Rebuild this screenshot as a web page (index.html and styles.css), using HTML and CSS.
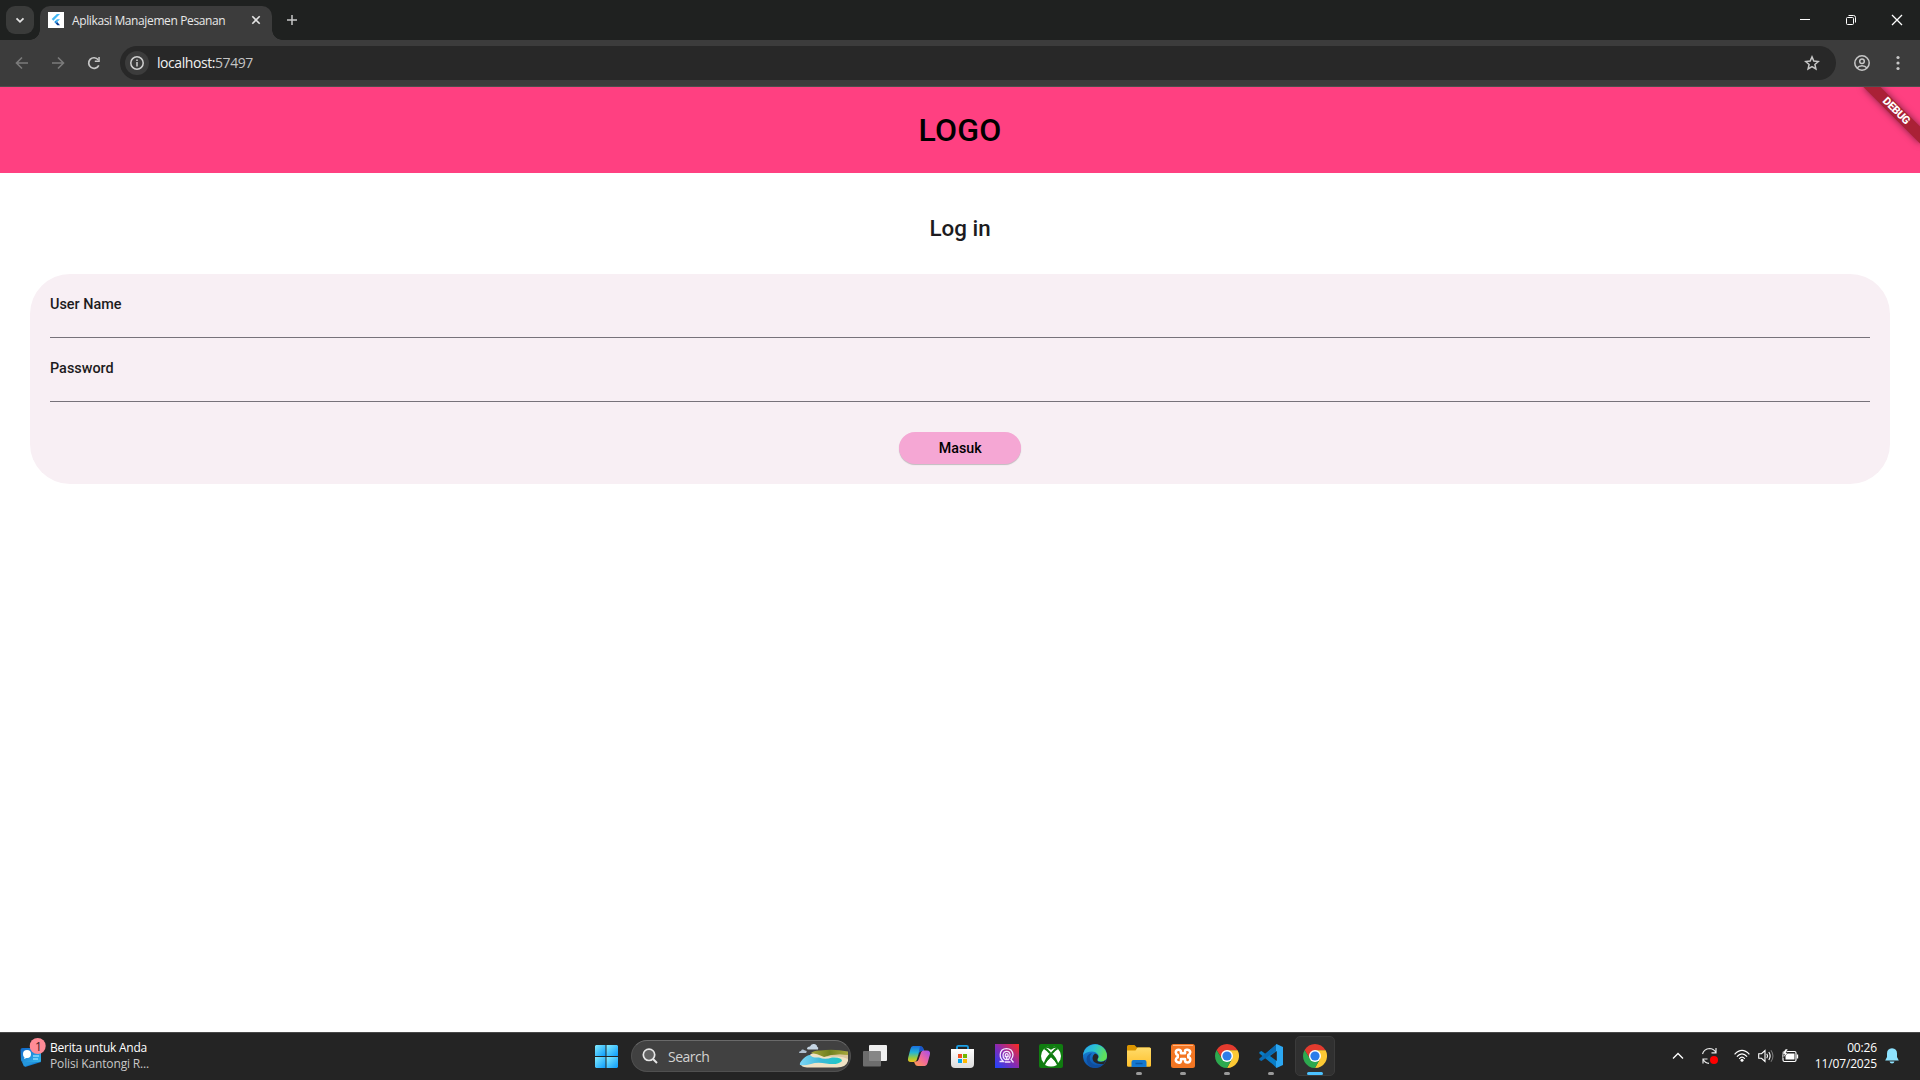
FILE: index.html
```html
<!DOCTYPE html>
<html lang="id">
<head>
<meta charset="utf-8">
<title>Aplikasi Manajemen Pesanan</title>
<link rel="stylesheet" href="styles.css">
</head>
<body>
<svg class="defs" width="0" height="0" aria-hidden="true">
  <defs>
    <linearGradient id="win" x1="0" y1="0" x2="1" y2="1"><stop offset="0" stop-color="#83ebfd"/><stop offset="1" stop-color="#0a9bfb"/></linearGradient>
    <linearGradient id="copA" x1="0" y1="0" x2="0" y2="1"><stop offset="0" stop-color="#1a6fe0"/><stop offset=".4" stop-color="#22b5d8"/><stop offset=".75" stop-color="#9ccb3c"/><stop offset="1" stop-color="#f2c21a"/></linearGradient>
    <linearGradient id="copB" x1="1" y1="0" x2="0" y2="1"><stop offset="0" stop-color="#a04df0"/><stop offset=".5" stop-color="#f0679c"/><stop offset="1" stop-color="#ffa24a"/></linearGradient>
    <linearGradient id="store" x1="0" y1="0" x2="0" y2="1"><stop offset="0" stop-color="#fff"/><stop offset="1" stop-color="#dcdcdc"/></linearGradient>
    <linearGradient id="pix" x1="0" y1="1" x2="1" y2="0"><stop offset="0" stop-color="#1c45ff"/><stop offset=".5" stop-color="#8a2ab0"/><stop offset="1" stop-color="#ff2a1c"/></linearGradient>
    <linearGradient id="edgeA" x1="0" y1="0" x2="1" y2=".3"><stop offset="0" stop-color="#2aa4ea"/><stop offset=".5" stop-color="#2bc3d2"/><stop offset="1" stop-color="#5fe05a"/></linearGradient>
    <linearGradient id="edgeB" x1="0" y1="0" x2="0" y2="1"><stop offset="0" stop-color="#1b8fe0"/><stop offset="1" stop-color="#0c4fa8"/></linearGradient>
    <linearGradient id="folder" x1="0" y1="0" x2="0" y2="1"><stop offset="0" stop-color="#ffdc6b"/><stop offset="1" stop-color="#ffc02c"/></linearGradient>
    <linearGradient id="sea" x1="0" y1="0" x2="1" y2="0"><stop offset="0" stop-color="#7fd6f5"/><stop offset=".5" stop-color="#3bb9d8"/><stop offset="1" stop-color="#1cc9c4"/></linearGradient>
    <linearGradient id="hill" x1="0" y1="0" x2="1" y2="0"><stop offset="0" stop-color="#a5a53a"/><stop offset=".5" stop-color="#70801f"/><stop offset="1" stop-color="#a9a83c"/></linearGradient>
    <linearGradient id="news" x1="0" y1="0" x2="1" y2="1"><stop offset="0" stop-color="#0f66c8"/><stop offset="1" stop-color="#35b8ee"/></linearGradient>
    <symbol id="chrome" viewBox="0 0 24 24">
      <path d="M12 6.300H22.600L22.390 6A12 12 0 0 0 1.610 6L7.100 14.900Z" fill="#e33b2e"/>
      <path d="M16.900 14.900L12 24A12 12 0 0 0 22.600 6.300H12Z" fill="#fcc934"/>
      <path d="M7.100 14.900L1.610 6A12 12 0 0 0 12 24L16.900 14.900Z" fill="#2da94f"/>
      <circle cx="12" cy="12" r="6" fill="#fff"/><circle cx="12" cy="12" r="4.600" fill="#2b7de9"/>
    </symbol>
  </defs>
</svg>

<div class="screen">
  <header class="tabstrip">
    <div class="tab-search"><svg width="28" height="28"><path d="M10.500 12.300L14 15.800L17.500 12.300" fill="none" stroke="#e3e3e3" stroke-width="1.800"/></svg></div>
    <div class="tab">
      <svg class="favicon" width="16" height="16"><rect width="16" height="16" fill="#fff"/><path d="M8.900 2H12L5.300 8.700L3.700 7.100Z" fill="#44b9f5"/><path d="M8.900 7.200H12L9.300 9.900L7.700 8.400Z" fill="#44b9f5"/><path d="M7.700 8.400L9.300 9.900L7.700 11.500L6.200 9.900Z" fill="#1f8fe0"/><path d="M7.700 11.500L9.300 9.900L12 13.300H9.400Z" fill="#0b3f95"/></svg>
      <span class="tab-title">Aplikasi Manajemen Pesanan</span>
      <svg class="tab-close" width="10" height="10"><path d="M1.300 1.300L8.700 8.700M8.700 1.300L1.300 8.700" stroke="#e3e3e3" stroke-width="1.600"/></svg>
    </div>
    <svg class="tab-new" width="12" height="12"><path d="M6 1V11M1 6H11" stroke="#c7c7c7" stroke-width="1.500"/></svg>
    <div class="window-controls">
      <svg width="46" height="40"><path d="M18 19.500H28" stroke="#fff"/></svg>
      <svg width="46" height="40"><g fill="none" stroke="#fff"><rect x="18.500" y="17.500" width="7" height="7" rx="1"/><path d="M20.500 15.500H25.500A2 2 0 0 1 27.500 17.500V22.500"/></g></svg>
      <svg width="46" height="40"><path d="M18 15L28 25M28 15L18 25" stroke="#fff" stroke-width="1.300"/></svg>
    </div>
  </header>

  <nav class="toolbar">
    <svg width="36" height="36"><path d="M24 18H13M18 12.500L12.500 18L18 23.500" fill="none" stroke="#7b7b7b" stroke-width="1.600"/></svg>
    <svg width="36" height="36"><path d="M12 18H23M18 12.500L23.500 18L18 23.500" fill="none" stroke="#7b7b7b" stroke-width="1.600"/></svg>
    <svg width="36" height="36"><path d="M22.800 20.300A5.300 5.300 0 1 1 22.200 14.800" fill="none" stroke="#c7c7c7" stroke-width="1.700"/><path d="M23.800 12V17H18.800V15.600H22.300V12Z" fill="#c7c7c7"/></svg>
    <div class="omnibox">
      <svg width="24" height="24"><circle cx="12" cy="12" r="12" fill="#3c3c3c"/><circle cx="12" cy="12" r="6.200" fill="none" stroke="#d0d0d0" stroke-width="1.500"/><path d="M12 11V15.400M12 8.400V10" stroke="#d0d0d0" stroke-width="1.500"/></svg>
      <span class="url">localhost:<span class="port">57497</span></span>
      <svg class="star" width="16" height="16"><path d="M8 1.900L9.800 6.100L14.300 6.500L10.900 9.500L11.900 13.900L8 11.600L4.100 13.900L5.100 9.500L1.700 6.500L6.200 6.100Z" fill="none" stroke="#c7c7c7" stroke-width="1.500"/></svg>
    </div>
    <svg class="profile" width="16" height="16"><g fill="none" stroke="#c7c7c7" stroke-width="1.500"><circle cx="8" cy="8" r="7.200"/><circle cx="8" cy="6.200" r="2.300"/><path d="M3 13C4.500 11.200 6 10.700 8 10.700S11.500 11.200 13 13"/></g></svg>
    <svg class="menu" width="4" height="16"><g fill="#c7c7c7"><circle cx="2" cy="2.500" r="1.600"/><circle cx="2" cy="8" r="1.600"/><circle cx="2" cy="13.500" r="1.600"/></g></svg>
  </nav>

  <main class="page">
    <div class="app-bar">LOGO</div>
    <div class="debug-corner"><div class="debug-band">DEBUG</div></div>
    <h1 class="heading">Log in</h1>
    <form class="card">
      <label class="field"><span class="label-text">User Name</span></label>
      <label class="field"><span class="label-text">Password</span></label>
      <button class="submit" type="button"><span class="submit-text">Masuk</span></button>
    </form>
  </main>

  <footer class="taskbar">
    <div class="widget">
      <svg width="30" height="32"><path d="M5 13L22 10L24 24L8 29Z" fill="#1683d8"/><path d="M3.500 12Q3.500 10 5.500 10H22Q24 10 24 12V22Q24 24 22 24H6Q4 24 4 22Z" fill="url(#news)"/><path d="M5 24L20 24L7 28.500Z" fill="#2496dc"/><circle cx="10" cy="16" r="4" fill="#fff"/><path d="M8 18L7 21L12 19Z" fill="#fff"/><path d="M16 18H22M16 21H21" stroke="#8bdcff" stroke-width="1.300"/><circle cx="20.700" cy="8" r="8" fill="#ff8b96"/><text x="18" y="12.500" class="badge-text">1</text></svg>
      <div class="widget-text"><div class="w1">Berita untuk Anda</div><div class="w2">Polisi Kantongi R...</div></div>
    </div>
    <div class="apps">
      <div class="app start"><svg width="24" height="24"><g fill="url(#win)"><path d="M2 1H11.500V12H1V2Z"/><path d="M12.500 1H23L24 2V12H12.500Z"/><path d="M1 13H11.500V24H2L1 23Z"/><path d="M12.500 13H24V23L23 24H12.500Z"/></g></svg></div>
      <div class="search">
        <svg width="16" height="16"><circle cx="7" cy="6.800" r="5.700" fill="#626262" stroke="#e6e6e6" stroke-width="1.700"/><path d="M11 11L15 15" stroke="#e6e6e6" stroke-width="1.900"/></svg>
        <span class="search-text">Search</span>
        <svg class="beach" width="50" height="26" viewBox="0 0 50 26"><path d="M12 11Q18 8 30 9H49V18Q47 24.500 38 24.500H8Q1 24 2 20Z" fill="#efe2c4"/><path d="M12 10Q15 7 22 7.500Q34 5.500 49 8.500V12.500Q42 11 32 12.500L25 14Q18 10.500 12 10Z" fill="url(#hill)"/><path d="M11 12Q13 15 20 14.500Q26 17 33 14.500Q43 14 43 18Q39 22.500 27 20.500Q18 19 12 21Q5 23 1 22Q0 20 4 16Q8 12 11 12Z" fill="url(#sea)"/><path d="M26 13.500Q36 10.500 49 12V16Q43 12.500 34 13.700Z" fill="#dcc8a0"/><path d="M8 6Q8 3.500 11 3.500Q12 .500 15 1Q18 1.500 18 3.500Q20 4.500 19 6.500H9Z" fill="#c5d5e2"/><path d="M0 10Q0 8 2 8Q3 5.500 6 7.500Q9 8 7 10Z" fill="#aebfce"/></svg>
      </div>
      <div class="app"><svg width="24" height="24"><rect x="6" y="1" width="18" height="16" rx="1" fill="#efefef"/><rect y="7" width="18" height="15.500" rx="1" fill="#777" fill-opacity=".88"/></svg></div>
      <div class="app"><svg width="24" height="24"><path d="M6 2H13Q15.500 2 16.300 4.500L17 7H14.500Q12.500 7 11.900 9L9.700 16Q9 18 7 18H4Q0 18 1.200 13.500L3.400 5Q4.200 2 6 2Z" fill="url(#copA)"/><path d="M13 2Q15.500 2 16.300 4.500L17 7H14.500Q12.500 7 11.900 9L11 12Z" fill="#1b55c8"/><path d="M18 22H11Q8.500 22 7.700 19.500L7 17.500H9Q11 17.500 11.600 15.500L14 8.500Q14.700 6.500 16.700 6.500H20Q24 6.500 22.800 11L20.600 19Q19.800 22 18 22Z" fill="url(#copB)"/></svg></div>
      <div class="app"><svg width="24" height="24"><path d="M6 6V3Q6 1.800 7.500 1.800H15.500Q17 1.800 17 3V6" fill="none" stroke="#1ba1e8" stroke-width="1.800"/><path d="M0 5H23V20Q23 24 19 24H4Q0 24 0 20Z" fill="url(#store)"/><path d="M7 10H11V14H7Z" fill="#f25022"/><path d="M12 10H16V14H12Z" fill="#70b800"/><path d="M7 15H11V19H7Z" fill="#00a4ef"/><path d="M12 15H16V19H12Z" fill="#ffb900"/></svg></div>
      <div class="app"><svg width="24" height="24"><rect width="24" height="24" fill="url(#pix)"/><g fill="none" stroke="#f3e8ff" stroke-width="1.300"><path d="M4.500 17.500H8.500Q5 14.500 5.200 10.500Q5.800 4.600 11.500 4.600T18 10.500Q18 13.500 16 15.500L18.500 18.500"/><path d="M10 18H15.500M10 15.500Q7.800 14 8 11Q8.500 7.300 11.700 7.300T15.200 11Q15.200 13 13.500 15.500H10"/><path d="M11.700 15V12.500M10.300 12.500V11Q10.300 9.700 11.700 9.700T13.100 11V12.500Z"/></g></svg></div>
      <div class="app"><svg width="24" height="24"><rect width="24" height="24" rx="2" fill="#107c10"/><circle cx="12" cy="12" r="10" fill="#fff"/><path d="M6 3.800Q9 3.400 12 5.700Q15 3.400 18 3.800Q15.500 1.800 12 1.800T6 3.800Z" fill="#107c10"/><path d="M4.600 20Q6.500 13 12 8.400Q17.500 13 19.400 20L18 21Q15.500 16.500 12 13.600Q8.500 16.500 6 21Z" fill="#107c10"/><path d="M12 13.600Q15.500 16.500 18 21Q12 24 6 21Q8.500 16.500 12 13.600Z" fill="#fff"/><path d="M12 8.500L8.300 4.800L6.300 3.600L4.900 4.900Q8.500 7 10.500 10ZM12 8.500L15.700 4.800L17.700 3.600L19.100 4.900Q15.500 7 13.500 10Z" fill="#107c10"/></svg></div>
      <div class="app"><svg width="24" height="24"><circle cx="12" cy="12" r="12" fill="url(#edgeB)"/><path d="M.100 11A12 12 0 0 1 24 12Q24 17 18.500 17.500Q14 17.500 14.500 15Q16.500 13 15 10.500Q13 7.500 9 7.500Q3 7.500 .100 11Z" fill="url(#edgeA)"/><path d="M14.500 15Q13.500 17.500 17 18Q20 18.500 23 15.500Q22.500 18 20.500 20.200Q17 20 14 19.500Q9.500 18 9.500 14Q9.500 11 12 9.500Q17 11 14.500 15Z" fill="#262626"/><path d="M9 9Q5 13 8 18Q12 23 20 20.500Q16 24 12 24Q4 22.500 3.500 15Q4 10 9 9Z" fill="#104d9c"/></svg></div>
      <div class="app run"><svg width="24" height="24"><path d="M0 2.500Q0 1 1.500 1H7.500L10 3.500H22.500Q24 3.500 24 5V8H0Z" fill="#dc9600"/><path d="M0 6.500H8.500L10.500 3.500H22.500Q24 3.500 24 5V21.500Q24 22.800 22.500 22.800H1.500Q0 22.800 0 21.500Z" fill="url(#folder)"/><path d="M4.500 23V18Q4.500 16 6.500 16H17.500Q19.500 16 19.500 18V23Z" fill="#1378d0"/><path d="M8.500 19.500H15.500" stroke="#0a57a4" stroke-width="1.500"/></svg></div>
      <div class="app run"><svg width="24" height="24"><rect width="24" height="24" rx="2.500" fill="#f37623"/><path d="M2 1.500H22" stroke="#ffb47f"/><path d="M10 9.300V8Q10 5.800 7.500 5.800T4.800 8.300Q4.800 10.200 6.700 11V13.400Q4.800 14.200 4.800 16T7.500 18.500T10 16.200V15H14V16.200Q14 18.500 16.500 18.500T19.200 16T17.300 13.400V11Q19.200 10.200 19.200 8.300T16.500 5.800T14 8V9.300Z" fill="none" stroke="#fff" stroke-width="2.600" stroke-linejoin="round"/></svg></div>
      <div class="app run"><svg width="24" height="24"><use href="#chrome"/></svg></div>
      <div class="app run"><svg width="24" height="24"><path d="M17.500 0L6.500 10L2.500 7L.400 8V9.500L14 20.500L17.500 24L18 23V17Z" fill="#087dc7"/><path d="M.400 14.500V16L2.500 17L18 6V0Z" fill="#0a6cb5"/><path d="M17.500 0L24 3V21L17.500 24L17 23V1Z" fill="#2ba7f2"/><path d="M17.800 7L11 12L17.800 17Z" fill="#262626"/></svg></div>
      <div class="app run active"><svg width="24" height="24"><use href="#chrome"/></svg></div>
    </div>
    <div class="tray">
      <svg width="12" height="8"><path d="M1 6.500L6 1.500L11 6.500" fill="none" stroke="#fff" stroke-width="1.300"/></svg>
      <svg class="sync" width="18" height="18"><path d="M1.500 7Q3 1.800 8.500 1.500Q12.500 1.500 15 5.500M15 1V5.800H10.500M6.500 12H2V16.500M2 12.200Q4 16 8 16.300" fill="none" stroke="#e8e8e8" stroke-width="1.200"/><circle cx="13" cy="13" r="4" fill="#f00"/></svg>
      <svg class="wifi" width="16" height="14"><g fill="none" stroke="#fff" stroke-width="1.200"><path d="M.600 5.300Q8-2.500 15.400 5.300"/><path d="M2.900 7.600Q8 2 13.100 7.600"/><path d="M5.200 9.800Q8 6.600 10.800 9.800"/></g><circle cx="8" cy="11.300" r="1.500" fill="#fff"/></svg>
      <svg class="sound" width="17" height="14"><g fill="none" stroke="#fff" stroke-width="1.100"><path d="M.700 4.700H3.500L7 1.500V12.500L3.500 9.300H.700Z"/><path d="M8.800 4.800Q10.300 7 8.800 9.200M10.800 3Q13.500 7 10.800 11"/><path d="M12.900 1.300Q17 7 12.900 12.700" stroke="#777"/></g></svg>
      <svg class="battery" width="17" height="14"><rect x="1" y="2.500" width="13" height="10" rx="1.500" fill="none" stroke="#fff" stroke-width="1.200"/><rect x="3.500" y="4.500" width="9" height="6" fill="#fff"/><path d="M15.500 5.500V9.500" stroke="#fff" stroke-width="1.300"/><path d="M3.500 0L0 5H2.500L1 9L6 3.700H4L6 0Z" fill="#fff" stroke="#222" stroke-width=".500"/></svg>
      <div class="clock"><div>00:26</div><div>11/07/2025</div></div>
      <svg class="bell" width="14" height="16"><path d="M7 .300Q12 .500 12 5.500V9L13.800 12.500H.200L2 9V5.500Q2 .500 7 .300ZM4.500 13.500H9.500Q9 15.500 7 15.500T4.500 13.500Z" fill="#8ee3ff"/></svg>
    </div>
  </footer>
</div>
</body>
</html>
```
FILE: styles.css
```css
* { box-sizing: border-box; }
body { margin: 0; overflow: hidden; }
svg { display: block; flex: none; }
.defs { position: absolute; }
.screen {
  width: 1920px;
  height: 1080px;
  display: flex;
  flex-direction: column;
  background: #fff;
  font-family: "Open Sans", "Noto Sans", sans-serif;
  white-space: nowrap;
}

/* Browser chrome */
.tabstrip {
  height: 40px;
  flex: none;
  display: flex;
  align-items: flex-start;
  background: #1f2120;
  padding-left: 6px;
}
.tab-search {
  width: 28px;
  height: 28px;
  margin: 6px 6px 0 0;
  border-radius: 9px;
  background: #3a3b3a;
}
.tab {
  width: 232px;
  height: 34px;
  margin-top: 6px;
  padding: 0 11px 6px 8px;
  display: flex;
  align-items: center;
  background: #3c3c3c;
  border-radius: 10px 10px 0 0;
  position: relative;
}
.tab::before, .tab::after {
  content: "";
  position: absolute;
  bottom: 0;
  width: 10px;
  height: 10px;
}
.tab::before { left: -10px; background: radial-gradient(circle at 0 0, transparent 9.5px, #3c3c3c 10px); }
.tab::after { right: -10px; background: radial-gradient(circle at 100% 0, transparent 9.5px, #3c3c3c 10px); }
.tab-title { margin-left: 8px; font-size: 12px; letter-spacing: -0.38px; color: #e8e8e8; }
.tab-close { margin-left: auto; }
.tab-new { margin: 14px 0 0 14px; }
.window-controls { display: flex; margin-left: auto; }
.toolbar {
  height: 47px;
  flex: none;
  display: flex;
  align-items: center;
  padding: 0 20px 1px 4px;
  background: #3c3c3c;
  border-bottom: 1px solid #4d4d4d;
}
.omnibox {
  width: 1716px;
  height: 34px;
  margin-left: 8px;
  padding: 0 16px 0 5px;
  display: flex;
  align-items: center;
  border-radius: 17px;
  background: #282828;
}
.url { margin-left: 8px; font-size: 14px; letter-spacing: -0.43px; color: #f0f0f0; }
.port { color: #c4c4c4; }
.star { margin-left: auto; }
.profile { margin-left: 18px; }
.menu { margin-left: auto; }

/* Web page */
.page {
  height: 945px;
  flex: none;
  position: relative;
  overflow: hidden;
  background: #fff;
  font-family: Roboto, sans-serif;
  color: #1d1b20;
}
.app-bar {
  height: 86px;
  display: flex;
  align-items: center;
  justify-content: center;
  background: #ff4081;
  color: #000;
  font-size: 32px;
  font-weight: 500;
  letter-spacing: 0.2px;
}
.debug-corner {
  position: absolute;
  top: 0;
  right: 0;
  width: 70px;
  height: 70px;
  overflow: hidden;
}
.debug-band {
  position: absolute;
  top: 28px;
  left: 30px;
  width: 80px;
  height: 12px;
  transform-origin: 40px -28px;
  transform: rotate(45deg);
  background: #aa2136;
  box-shadow: 0 0 7px rgba(0, 0, 0, 0.5);
  color: #fff;
  font-size: 11px;
  font-weight: 800;
  line-height: 12px;
  letter-spacing: -0.4px;
  text-align: center;
}
.heading {
  margin: 39px 0 0;
  height: 32px;
  line-height: 32px;
  font-size: 22.4px;
  font-weight: 500;
  text-align: center;
}
.card {
  height: 210px;
  margin: 30px 30px 0;
  padding: 0 20px;
  display: flex;
  flex-direction: column;
  border-radius: 40px;
  background: #f8eff4;
}
.field {
  height: 64px;
  padding-top: 20px;
  border-bottom: 1px solid #77727a;
  font-size: 15.5px;
  line-height: 20px;
  font-weight: 500;
}
.label-text {
  display: inline-block;
  transform: scaleX(0.93);
  transform-origin: 0 50%;
}
.submit {
  width: 122.6px;
  height: 32px;
  margin: 30px auto 0;
  padding: 0;
  border: 0;
  border-radius: 16px;
  background: #f5a7d4;
  box-shadow: 0 1px 1px rgba(0, 0, 0, 0.22);
  font: 500 15.5px Roboto, sans-serif;
  color: #000;
}
.submit-text {
  display: inline-block;
  transform: scaleX(0.92);
}

/* Windows taskbar */
.taskbar {
  height: 48px;
  flex: none;
  display: grid;
  grid-template-columns: 585px 750px 1fr;
  background: #242424;
  border-top: 1px solid #484848;
  color: #fff;
}
.widget { display: flex; padding: 5px 0 0 17px; }
.badge-text { font-size: 12px; fill: #3a2024; }
.widget-text { margin-left: 3px; padding-top: 2px; font-size: 12px; line-height: 16px; }
.w1 { letter-spacing: -0.25px; }
.w2 { letter-spacing: -0.15px; color: #c8c8c8; }
.apps { display: flex; align-items: flex-start; padding-top: 3px; }
.app {
  width: 40px;
  height: 40px;
  margin-right: 4px;
  padding: 7px;
  flex: none;
  position: relative;
  border: 1px solid transparent;
  border-radius: 5px;
}
.app.start { padding-left: 8px; margin-right: 6px; }
.search {
  width: 220px;
  height: 32px;
  margin: 4px 4px 0 0;
  padding: 0 1px 0 10px;
  flex: none;
  display: flex;
  align-items: center;
  border: 1px solid #505050;
  border-top-color: #6a6a6a;
  border-radius: 16px;
  background: #414141;
}
.search-text { margin-left: 10px; font-size: 14px; letter-spacing: -0.5px; color: #d2d2d2; }
.beach { margin-left: auto; }
.run::after {
  content: "";
  position: absolute;
  left: 16px;
  bottom: 0;
  width: 6px;
  height: 3px;
  border-radius: 2px;
  background: #9a9a9a;
}
.active { background: #303030; border-color: #3b3b3b; margin-right: 0; }
.active::after { left: 11px; width: 16px; background: #4cc2ff; }
.tray { display: flex; align-items: center; padding: 0 21px 1px 337px; }
.sync { margin-left: 17px; }
.wifi { margin-left: 15px; }
.sound { margin-left: 8px; }
.battery { margin-left: 7px; }
.clock { margin-left: auto; text-align: right; font-size: 12px; line-height: 16px; letter-spacing: -0.15px; }
.bell { margin-left: 8px; }
```
